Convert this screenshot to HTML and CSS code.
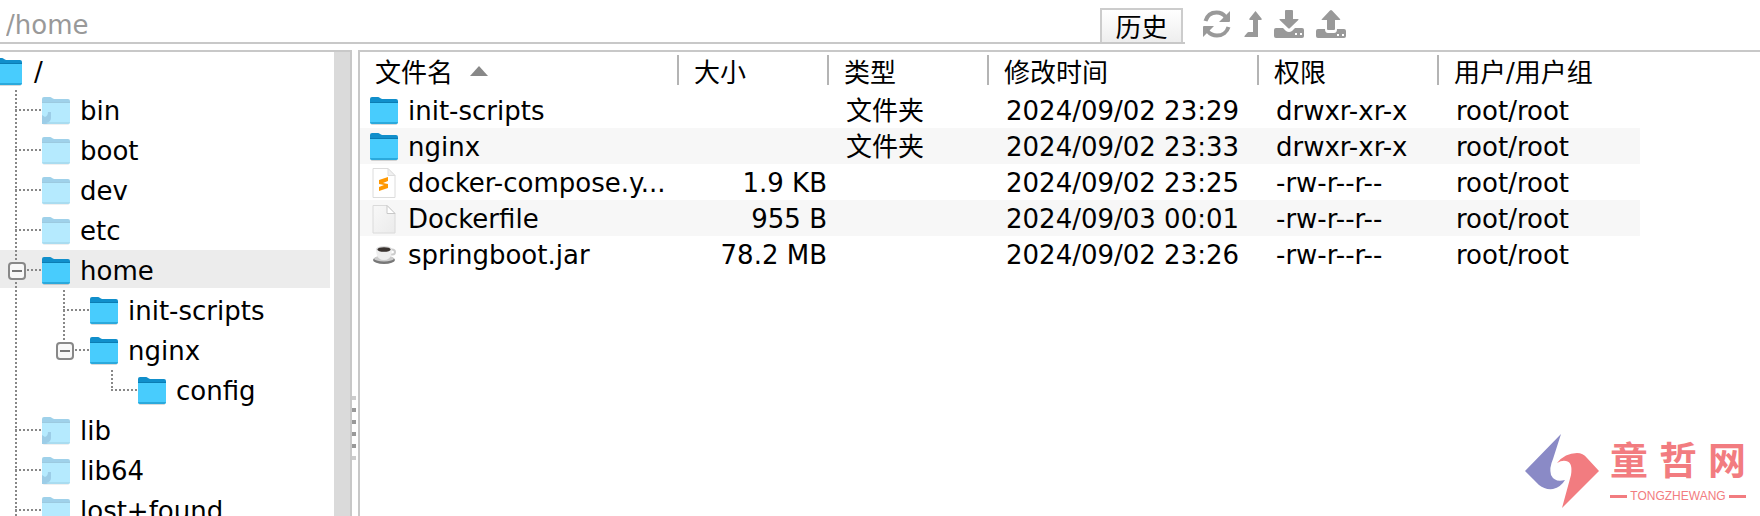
FILE: index.html
```
<!DOCTYPE html>
<html lang="zh">

<head>
    <meta charset="utf-8"/>
    <meta name="viewport" content="width=device-width, initial-scale=1.0">
    <title>文件管理</title>
    <link rel="stylesheet" href="styles.css">
</head>
<body>
    <svg class="defs" aria-hidden="true">
        <defs>
            <linearGradient id="paper" x1="0" y1="0" x2="1" y2="1">
                <stop offset="0" stop-color="#f8f8f8"/>
                <stop offset="1" stop-color="#ebebeb"/>
            </linearGradient>
            <symbol id="folder" viewBox="0 0 30 28">
                <path d="M2 25h26v2q0 1-1 1H3q-1 0-1-1z" fill="#000" opacity=".15"/>
                <path d="M1 2q0-2 2-2h6q1 0 2 1l2 1h14q2 0 2 2v8H1z" fill="#118fcb"/>
                <path d="M1 6h28v19q0 2-2 2H3q-2 0-2-2z" fill="#48ccfd"/>
                <path d="M1 5h28v1H1z" fill="#0b7db4"/>
                <path d="M1 25h28q0 2-2 2H3q-2 0-2-2z" fill="#2ba9dc"/>
            </symbol>
            <symbol id="folder-link" viewBox="0 0 30 28">
                <use href="#folder"/>
                <path d="M1 27v-9l3 2q3-1 3-5h3v6q0 4-5 5l2 1z" fill="#0a83c4"/>
            </symbol>
            <symbol id="file-sublime" viewBox="0 0 30 30">
                <path d="M4 .5h15l7 7v22H4z" fill="#fff" stroke="#dcdcdc"/>
                <path d="M19 .5v7h7z" fill="#f0f0f0" stroke="#ddd"/>
                <path d="M10 12l9-3v4l-5 2 5 1v4l-9 3v-4l5-2-5-1z" fill="#ff9800"/>
            </symbol>
            <symbol id="file-blank" viewBox="0 0 30 30">
                <path d="M4 1.500h14l8 8v19.500H4z" fill="url(#paper)" stroke="#dadada"/>
                <path d="M18 1.500v8h8z" fill="#fff" stroke="#c8c8c8"/>
            </symbol>
            <symbol id="file-jar" viewBox="0 0 30 30">
                <ellipse cx="15" cy="20" rx="11" ry="4" fill="#777"/>
                <ellipse cx="15" cy="18.500" rx="10" ry="3" fill="#ccc"/>
                <ellipse cx="23" cy="12" rx="3" ry="2.500" fill="none" stroke="#ccc" stroke-width="2"/>
                <path d="M7 9q0 11 8 11t8-11z" fill="#eee"/>
                <ellipse cx="15" cy="9" rx="8" ry="3" fill="#ddd"/>
                <ellipse cx="15" cy="9.500" rx="6.500" ry="2.300" fill="#3a3330"/>
            </symbol>
        </defs>
    </svg>

    <div class="toolbar">
        <div class="address">
            <input type="text" class="path" aria-label="路径" value="/home"/>
            <button type="button" class="history">历史</button>
        </div>
        <div class="actions">
            <button type="button" class="refresh" aria-label="刷新">
                <svg width="30" height="28" viewBox="0 0 30 28">
                    <path d="M3.500 11C5 6 9 2.500 14.500 2.500c4 0 7 1.500 9 4.500M26.500 17c-1.500 5-6 8.500-11.500 8.500-4 0-7-1.500-9.500-4.500" fill="none" stroke="#999" stroke-width="4"/>
                    <path d="M28 1v10q0 1-1 1H17zM1 27V17q0-1 1-1h10z" fill="#999"/>
                </svg>
            </button>
            <button type="button" class="up" aria-label="上级目录">
                <svg width="18" height="26" viewBox="0 0 18 26">
                    <path d="M11.500 0l6 7.500q1 1.500-1 1.500H14v17H1q-1 0-.5-1l3-3.500q.5-.5 1-.5H9V9H6.500q-2 0-1-1.500z" fill="#999"/>
                </svg>
            </button>
            <button type="button" class="download" aria-label="下载">
                <svg width="30" height="28" viewBox="0 0 30 28">
                    <path d="M12 0h6q1 0 1 1v8h5q1 0 .3 1l-8.300 8q-1 1-2 0l-8.300-8Q5 9 6 9h5V1q0-1 1-1z" fill="#999"/>
                    <path d="M2 18h7l3 3q3 2 6 0l3-3h7q2 0 2 2v6q0 2-2 2H2q-2 0-2-2v-6q0-2 2-2z" fill="#999"/>
                    <path d="M21 23h2v2h-2zM26 23h2v2h-2z" fill="#fff"/>
                </svg>
            </button>
            <button type="button" class="upload" aria-label="上传">
                <svg width="30" height="28" viewBox="0 0 30 28">
                    <path d="M16 .5l8 8.500q.8 1-.5 1H19v9q0 1-1 1h-6q-1 0-1-1v-9H6.500Q5 10 6 9l8-8.500q1-1 2 0z" fill="#999"/>
                    <path d="M2 19h7q0 4 3 4h6q3 0 3-4h7q2 0 2 2v5q0 2-2 2H2q-2 0-2-2v-5q0-2 2-2z" fill="#999"/>
                    <path d="M21 24h2v2h-2zM26 24h2v2h-2z" fill="#fff"/>
                </svg>
            </button>
        </div>
    </div>

    <div class="panes">
        <div class="tree-pane">
            <div class="tree">
                <div class="row root"><svg class="folder"><use href="#folder"/></svg>/</div>
                <ul class="top">
                    <li><div class="row"><svg class="folder dim"><use href="#folder-link"/></svg>bin</div></li>
                    <li><div class="row"><svg class="folder dim"><use href="#folder"/></svg>boot</div></li>
                    <li><div class="row"><svg class="folder dim"><use href="#folder"/></svg>dev</div></li>
                    <li><div class="row"><svg class="folder dim"><use href="#folder"/></svg>etc</div></li>
                    <li>
                        <div class="row open selected"><button type="button" class="toggle" aria-label="折叠"></button><svg class="folder"><use href="#folder"/></svg>home</div>
                        <ul>
                            <li><div class="row"><svg class="folder"><use href="#folder"/></svg>init-scripts</div></li>
                            <li>
                                <div class="row open"><button type="button" class="toggle" aria-label="折叠"></button><svg class="folder"><use href="#folder"/></svg>nginx</div>
                                <ul>
                                    <li><div class="row"><svg class="folder"><use href="#folder"/></svg>config</div></li>
                                </ul>
                            </li>
                        </ul>
                    </li>
                    <li><div class="row"><svg class="folder dim"><use href="#folder-link"/></svg>lib</div></li>
                    <li><div class="row"><svg class="folder dim"><use href="#folder-link"/></svg>lib64</div></li>
                    <li><div class="row"><svg class="folder dim"><use href="#folder"/></svg>lost+found</div></li>
                </ul>
            </div>
            <div class="scrollbar"></div>
        </div>

        <div class="splitter"><i></i><i></i><i></i><i></i><i></i><i></i></div>

        <div class="list-pane">
            <table>
                <colgroup>
                    <col class="col-name"><col class="col-size"><col class="col-type"><col class="col-time"><col class="col-mode"><col class="col-owner">
                </colgroup>
                <thead>
                    <tr>
                        <th>文件名<span class="sort"></span></th>
                        <th>大小</th>
                        <th>类型</th>
                        <th>修改时间</th>
                        <th>权限</th>
                        <th>用户/用户组</th>
                    </tr>
                </thead>
                <tbody>
                    <tr>
                        <td><div class="name"><svg class="folder"><use href="#folder"/></svg>init-scripts</div></td>
                        <td class="size"></td>
                        <td>文件夹</td>
                        <td>2024/09/02 23:29</td>
                        <td>drwxr-xr-x</td>
                        <td>root/root</td>
                    </tr>
                    <tr>
                        <td><div class="name"><svg class="folder"><use href="#folder"/></svg>nginx</div></td>
                        <td class="size"></td>
                        <td>文件夹</td>
                        <td>2024/09/02 23:33</td>
                        <td>drwxr-xr-x</td>
                        <td>root/root</td>
                    </tr>
                    <tr>
                        <td><div class="name"><svg class="file"><use href="#file-sublime"/></svg>docker-compose.y...</div></td>
                        <td class="size">1.9 KB</td>
                        <td></td>
                        <td>2024/09/02 23:25</td>
                        <td>-rw-r--r--</td>
                        <td>root/root</td>
                    </tr>
                    <tr>
                        <td><div class="name"><svg class="file"><use href="#file-blank"/></svg>Dockerfile</div></td>
                        <td class="size">955 B</td>
                        <td></td>
                        <td>2024/09/03 00:01</td>
                        <td>-rw-r--r--</td>
                        <td>root/root</td>
                    </tr>
                    <tr>
                        <td><div class="name"><svg class="file"><use href="#file-jar"/></svg>springboot.jar</div></td>
                        <td class="size">78.2 MB</td>
                        <td></td>
                        <td>2024/09/02 23:26</td>
                        <td>-rw-r--r--</td>
                        <td>root/root</td>
                    </tr>
                </tbody>
            </table>
        </div>
    </div>

    <div class="watermark">
        <svg width="74" height="74" viewBox="0 0 74 74">
            <path d="M36 0L0 37l14 14q6 5 14 4 8-2 12-9-10 3-14-5-2-7 2-16z" fill="#8a8ac6"/>
            <path d="M32 29q8-10 20-10 6 0 10 5l12 13-37 37 9-33q2-13-5-14-4-1-9 2z" fill="#f27c80"/>
        </svg>
        <div class="brand">
            <div class="brand-name"><span>童</span><span>哲</span><span>网</span></div>
            <div class="brand-sub">TONGZHEWANG</div>
        </div>
    </div>
</body>
</html>
```
FILE: styles.css
```
* {
    box-sizing: border-box;
}
body {
    display: flex;
    flex-direction: column;
    height: 100vh;
    margin: 0;
    overflow: hidden;
    background: #fff;
    color: #000;
    font-family: "DejaVu Sans", "Noto Sans CJK SC", sans-serif;
    font-size: 26px;
    line-height: 36px;
}
svg {
    flex: none;
    display: block;
}
button {
    flex: none;
    padding: 0;
    border: none;
    background: none;
    font: inherit;
    color: inherit;
}
.defs {
    position: absolute;
    width: 0;
    height: 0;
}

/* toolbar */
.toolbar {
    flex: none;
    display: flex;
    height: 44px;
}
.address {
    display: flex;
    align-items: flex-end;
    width: 100%;
    max-width: 1185px;
    padding-right: 2px;
    border-bottom: 2px solid #c8c8c8;
}
.path {
    flex: 1;
    min-width: 0;
    height: 34px;
    padding: 0 6px;
    border: none;
    outline: none;
    font: inherit;
    color: #999;
}
.history {
    width: 83px;
    height: 34px;
    padding-top: 2px;
    border: 2px solid #ccc;
    border-bottom: none;
    background: linear-gradient(#fff, #eee);
    line-height: 32px;
}
.actions {
    display: flex;
    align-items: center;
    gap: 12px;
    padding: 4px 0 0 17px;
}

/* panes */
.panes {
    flex: 1;
    display: flex;
    min-height: 0;
    margin-top: 6px;
}
.tree-pane {
    flex: none;
    display: flex;
    width: 352px;
    border-top: 2px solid #c8c8c8;
    border-right: 2px solid #c8c8c8;
}
.tree {
    flex: 1;
    position: relative;
    z-index: 0;
    padding-right: 4px;
    overflow: hidden;
}
.scrollbar {
    width: 16px;
    background: #dadada;
}
.tree ul {
    margin: 0;
    padding: 0 0 0 15px;
    list-style: none;
}
.tree li ul {
    padding-left: 48px;
}
.tree li {
    background:
        repeating-linear-gradient(#888 0 2px, transparent 2px 4px) 0 0 / 2px 100% no-repeat,
        repeating-linear-gradient(90deg, #888 0 2px, transparent 2px 4px) 0 19px / 26px 2px no-repeat;
}
.tree li li:last-child {
    background-size: 2px 20px, 26px 2px;
}
.row {
    position: relative;
    display: flex;
    align-items: center;
    gap: 9px;
    height: 40px;
    padding: 2px 0 0 26px;
}
.row.root {
    gap: 11px;
    height: 38px;
    padding-left: 0;
    margin-left: -7px;
}
.row.open {
    gap: 0;
    padding-left: 0;
}
.row.open .folder {
    margin-right: 9px;
}
.row.selected::before {
    content: "";
    position: absolute;
    z-index: -1;
    inset: 0 0 2px -15px;
    background: #ececec;
}
.toggle {
    display: grid;
    place-items: center;
    width: 18px;
    height: 18px;
    margin: 0 15px 0 -7px;
    border: 2px solid #888;
    border-radius: 4px;
    background: #f8f8f8;
}
.toggle::before {
    content: "";
    width: 10px;
    height: 2px;
    background: #777;
}
.folder {
    width: 30px;
    height: 28px;
}
.folder.dim {
    opacity: .4;
}
.file {
    width: 30px;
    height: 30px;
}
.splitter {
    flex: none;
    display: flex;
    flex-direction: column;
    gap: 8px;
    width: 6px;
    padding-top: 346px;
}
.splitter i {
    flex: none;
    width: 4px;
    height: 4px;
    background: #999;
}
.splitter i:first-child,
.splitter i:last-child {
    background: #ccc;
}

/* file list */
.list-pane {
    flex: 1;
    min-width: 0;
    overflow: hidden;
    border-top: 2px solid #c8c8c8;
    border-left: 2px solid #c8c8c8;
}
table {
    width: 1280px;
    table-layout: fixed;
    border-collapse: collapse;
}
.col-name { width: 319px; }
.col-size { width: 150px; }
.col-type { width: 160px; }
.col-time { width: 270px; }
.col-mode { width: 180px; }
.col-owner { width: 201px; }
th {
    height: 40px;
    padding: 2px 0 0 15px;
    font-weight: normal;
    text-align: left;
    background: linear-gradient(#b4b4b4, #b4b4b4) 100% 3px / 2px 30px no-repeat;
}
th:last-child {
    background: none;
}
.sort {
    display: inline-block;
    margin-left: 17px;
    border: solid transparent;
    border-width: 0 9px 10px;
    border-bottom-color: #888;
    vertical-align: 6px;
}
td {
    height: 36px;
    padding: 2px 0 0 17px;
    line-height: 32px;
    white-space: nowrap;
}
td:first-child {
    padding-left: 9px;
}
td.size {
    padding-right: 2px;
    text-align: right;
}
tbody tr:nth-child(even) {
    background: #f7f7f7;
}
.name {
    display: flex;
    align-items: center;
    gap: 9px;
}

/* watermark lies over the file list */
.watermark {
    position: absolute;
    right: 14px;
    bottom: 8px;
    display: flex;
    align-items: center;
    gap: 11px;
    color: #f27c80;
}
.brand {
    width: 136px;
}
.brand-name {
    display: flex;
    justify-content: space-between;
    font-family: "Noto Sans CJK SC", sans-serif;
    font-size: 38px;
    font-weight: bold;
    line-height: 44px;
}
.brand-sub {
    display: flex;
    align-items: center;
    justify-content: space-between;
    padding-top: 6px;
    font-family: "Liberation Sans", sans-serif;
    font-size: 12px;
    line-height: 20px;
}
.brand-sub::before,
.brand-sub::after {
    content: "";
    width: 17px;
    height: 3px;
    background: #f27c80;
}
```
